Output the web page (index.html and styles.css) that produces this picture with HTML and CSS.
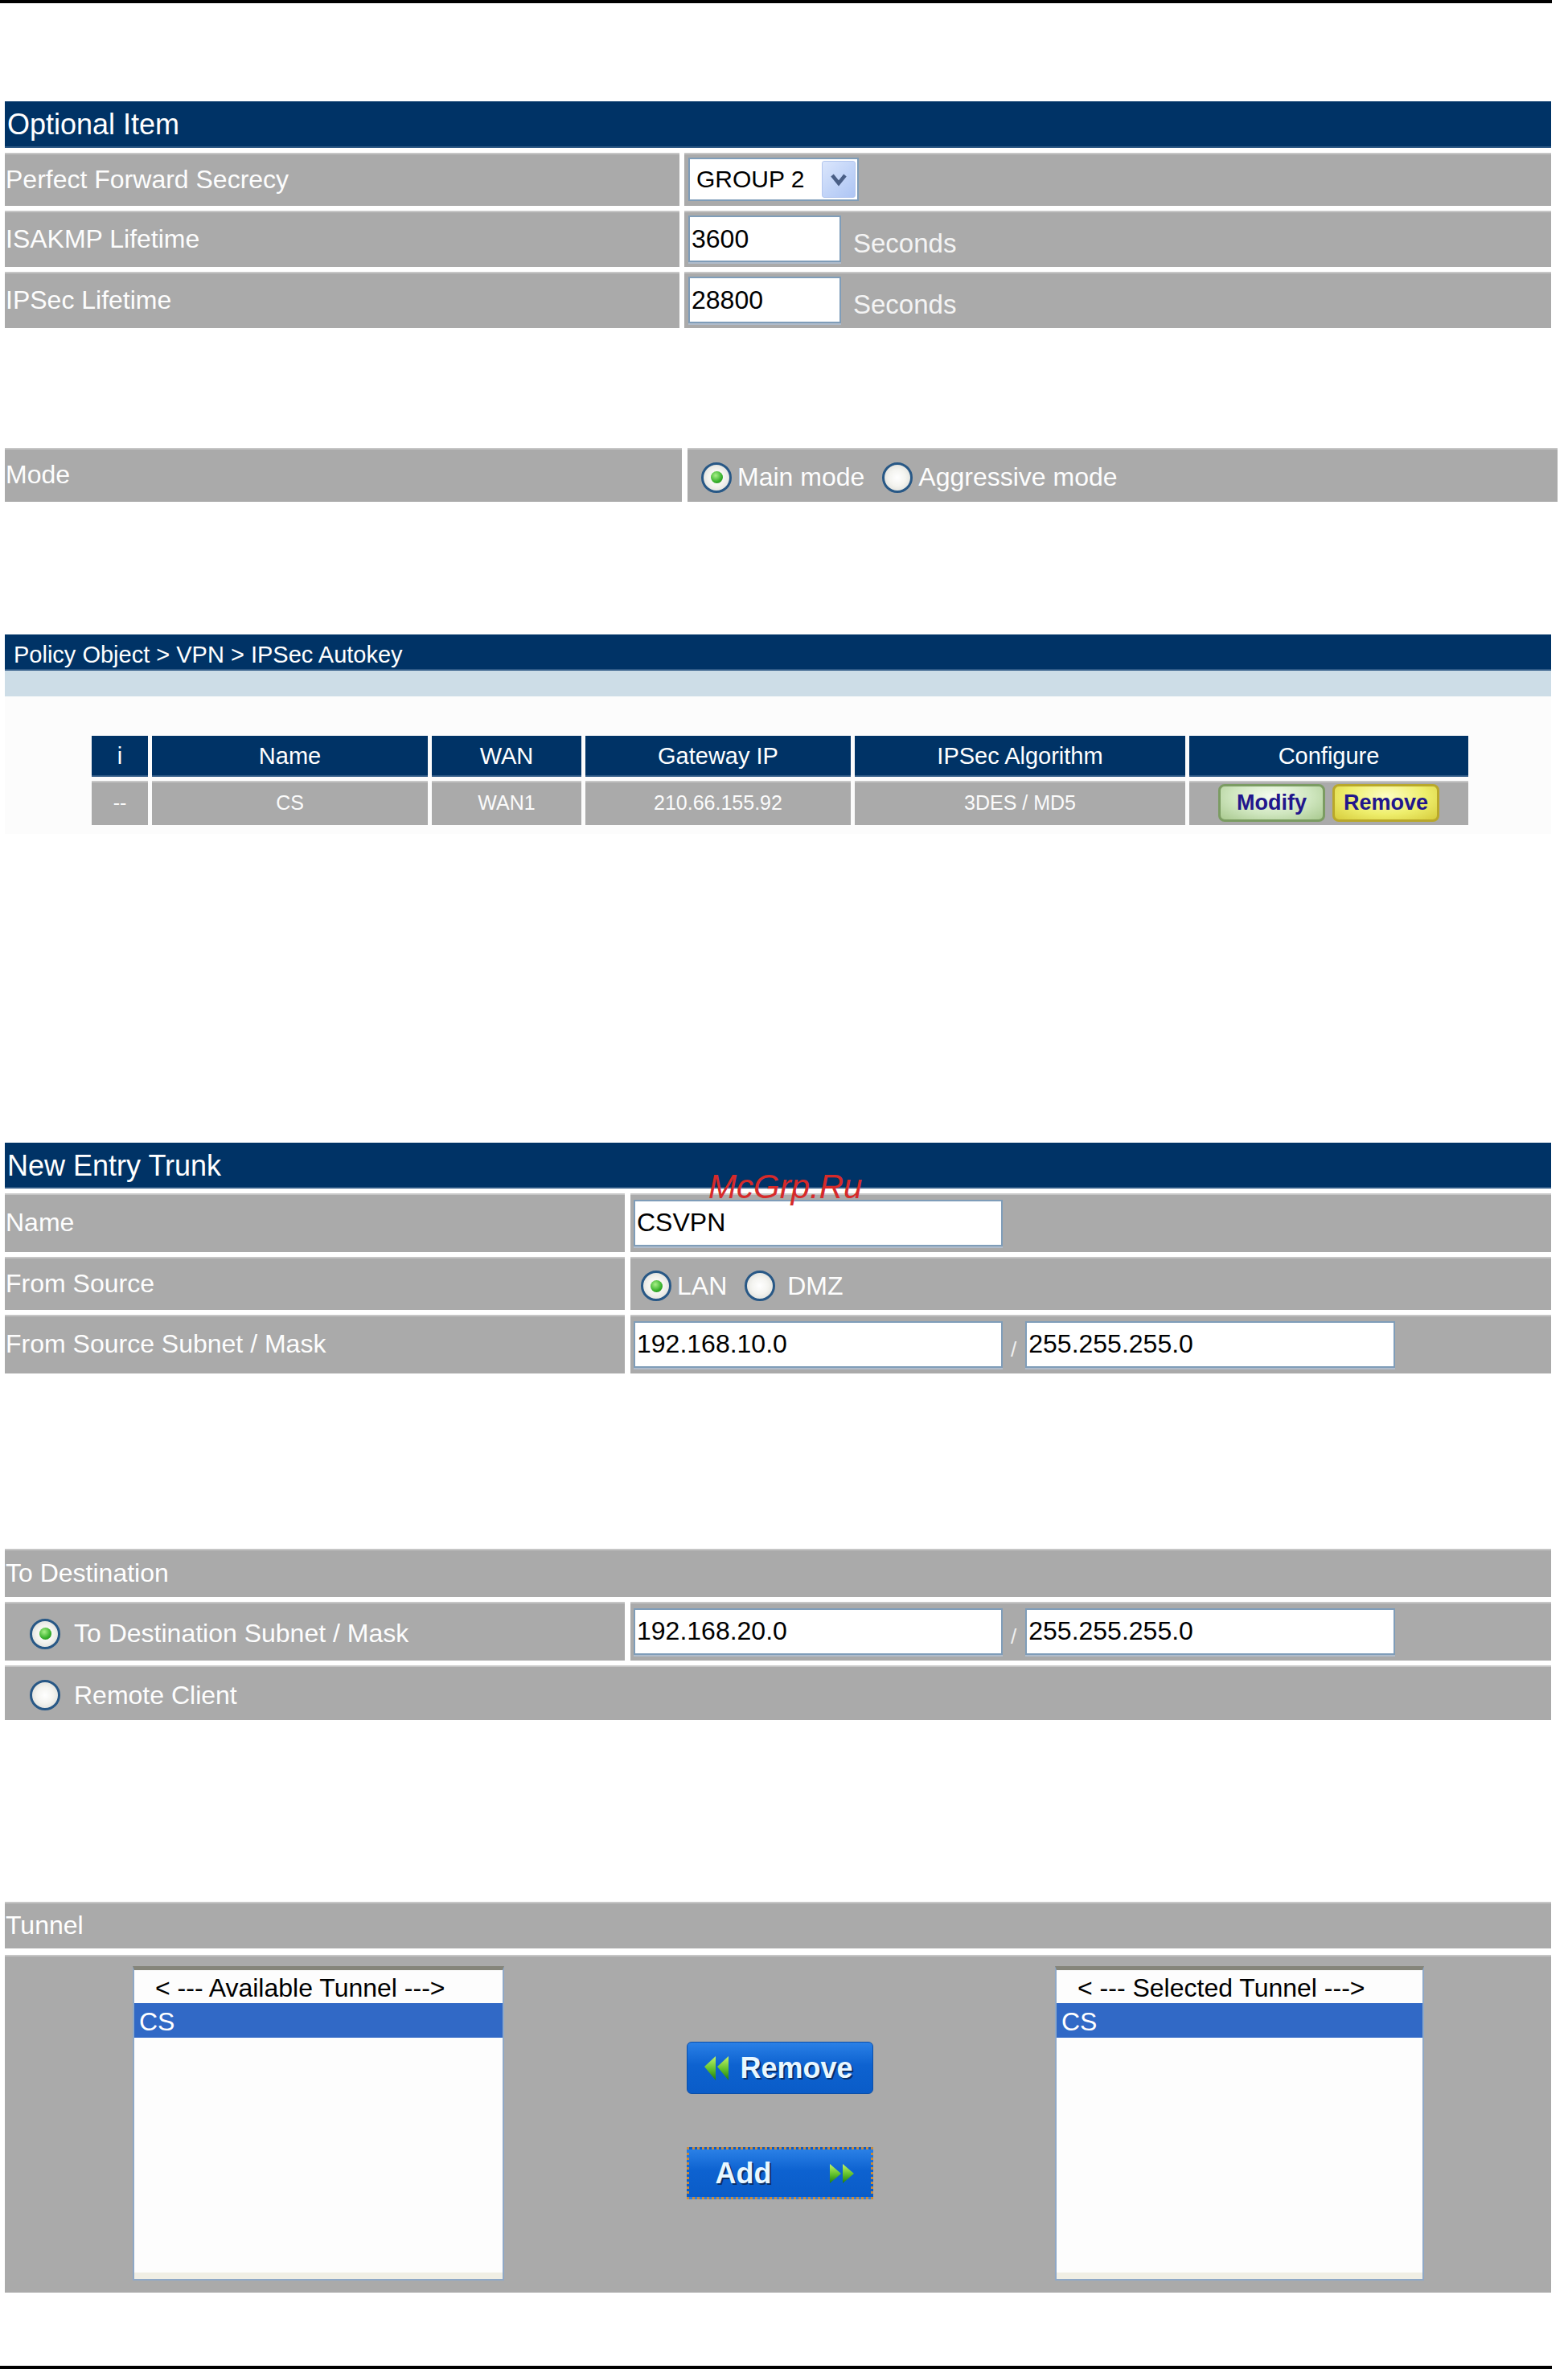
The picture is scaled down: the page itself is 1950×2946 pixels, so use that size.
FILE: index.html
```html
<!DOCTYPE html>
<html>
<head>
<meta charset="utf-8">
<title>IPSec Autokey</title>
<link rel="stylesheet" href="styles.css">
</head>
<body>
<div class="page">
  <div class="rule"></div>

  <section class="block block-optional">
    <div class="bar navy h58">Optional Item</div>
    <div class="row cols-a h66">
      <div class="cell label">Perfect Forward Secrecy</div>
      <div class="cell value pad5">
        <div class="select">
          <span class="select-text">GROUP 2</span>
          <span class="select-btn"><svg width="40" height="44" viewBox="0 0 40 44"><polyline points="12,17 20,27 28,17" fill="none" stroke="#4a5f86" stroke-width="4.5"/></svg></span>
        </div>
      </div>
    </div>
    <div class="row cols-a h70">
      <div class="cell label">ISAKMP Lifetime</div>
      <div class="cell value pad5">
        <div class="field w190">3600</div>
        <span class="unit">Seconds</span>
      </div>
    </div>
    <div class="row cols-a h70">
      <div class="cell label">IPSec Lifetime</div>
      <div class="cell value pad5">
        <div class="field w190">28800</div>
        <span class="unit">Seconds</span>
      </div>
    </div>
  </section>

  <section class="block block-mode">
    <div class="row cols-mode h67">
      <div class="cell label">Mode</div>
      <div class="cell value pad17 low">
        <span class="radio checked"></span><span class="opt">Main mode</span>
        <span class="radio gap-l"></span><span class="opt">Aggressive mode</span>
      </div>
    </div>
  </section>

  <section class="block block-policy">
    <div class="bar navy h45 crumb">Policy Object &gt; VPN &gt; IPSec Autokey</div>
    <div class="band"></div>
    <div class="policy-area">
      <div class="ptable">
        <div class="th">i</div>
        <div class="th">Name</div>
        <div class="th">WAN</div>
        <div class="th">Gateway IP</div>
        <div class="th">IPSec Algorithm</div>
        <div class="th">Configure</div>
        <div class="td">--</div>
        <div class="td">CS</div>
        <div class="td">WAN1</div>
        <div class="td">210.66.155.92</div>
        <div class="td">3DES / MD5</div>
        <div class="td td-btns">
          <span class="sbtn sbtn-modify">Modify</span>
          <span class="sbtn sbtn-remove">Remove</span>
        </div>
      </div>
    </div>
  </section>

  <section class="block block-trunk">
    <div class="bar navy h57">New Entry Trunk</div>
    <div class="row cols-b h73">
      <div class="cell label">Name</div>
      <div class="cell value pad4">
        <div class="field w459">CSVPN</div>
      </div>
    </div>
    <div class="row cols-b h66">
      <div class="cell label">From Source</div>
      <div class="cell value pad13 low">
        <span class="radio checked"></span><span class="opt">LAN</span>
        <span class="radio gap-l"></span><span class="opt opt-wide">DMZ</span>
      </div>
    </div>
    <div class="row cols-b h73">
      <div class="cell label">From Source Subnet / Mask</div>
      <div class="cell value pad4">
        <div class="field w459">192.168.10.0</div>
        <span class="slash">/</span>
        <div class="field w460">255.255.255.0</div>
      </div>
    </div>
  </section>

  <section class="block block-dest">
    <div class="bar grey h60">To Destination</div>
    <div class="row cols-b h73">
      <div class="cell label pad31 low">
        <span class="radio checked"></span><span class="opt opt-dest">To Destination Subnet / Mask</span>
      </div>
      <div class="cell value pad4">
        <div class="field w459">192.168.20.0</div>
        <span class="slash">/</span>
        <div class="field w460">255.255.255.0</div>
      </div>
    </div>
    <div class="row cols-full h68">
      <div class="cell label pad31 low">
        <span class="radio"></span><span class="opt opt-dest">Remote Client</span>
      </div>
    </div>
  </section>

  <section class="block block-tunnel">
    <div class="bar grey h58">Tunnel</div>
    <div class="tunnel-body">
      <div class="listbox">
        <div class="lb-opt lb-head">&lt; --- Available Tunnel ---&gt;</div>
        <div class="lb-opt lb-sel">CS</div>
      </div>
      <div class="mover">
        <div class="bbtn bbtn-remove">
          <svg class="arrows" width="38" height="34" viewBox="0 0 38 34"><defs><linearGradient id="ga" x1="0" y1="0" x2="0" y2="1"><stop offset="0" stop-color="#c4f56a"/><stop offset="0.55" stop-color="#5fc02a"/><stop offset="1" stop-color="#1f7a12"/></linearGradient></defs><polygon points="3,15 17,2 17,32" fill="url(#ga)"/><polygon points="19,15 33,2 33,32" fill="url(#ga)"/></svg>
          <span class="bbtn-text">Remove</span>
        </div>
        <div class="bbtn bbtn-add">
          <span class="bbtn-text">Add</span>
          <svg class="arrows" width="36" height="28" viewBox="0 0 36 28"><defs><linearGradient id="gb" x1="0" y1="0" x2="0" y2="1"><stop offset="0" stop-color="#c4f56a"/><stop offset="0.55" stop-color="#5fc02a"/><stop offset="1" stop-color="#1f7a12"/></linearGradient></defs><polygon points="3,2 17,14 3,26" fill="url(#gb)"/><polygon points="19,2 33,14 19,26" fill="url(#gb)"/></svg>
        </div>
      </div>
      <div class="listbox">
        <div class="lb-opt lb-head">&lt; --- Selected Tunnel ---&gt;</div>
        <div class="lb-opt lb-sel">CS</div>
      </div>
    </div>
  </section>

  <div class="rule rule-bottom"></div>

  <div class="watermark">McGrp.Ru</div>
</div>
</body>
</html>
```

FILE: styles.css
```css
* { box-sizing: border-box; }
html, body { margin: 0; padding: 0; background: #ffffff; }
body { font-family: "Liberation Sans", Arial, sans-serif; color: #ffffff; }

.page { position: relative; width: 1950px; height: 2946px; overflow: hidden; }

.rule { width: 1930px; height: 4px; background: #000000; }
.rule-bottom { margin-top: 91px; }

.block { margin-left: 6px; width: 1923px; display: flex; flex-direction: column; gap: 6px; }
.block-optional { margin-top: 122px; }
.block-mode { margin-top: 149px; width: 1931px; }
.block-policy { margin-top: 165px; gap: 0; }
.block-trunk { margin-top: 384px; }
.block-dest { margin-top: 218px; }
.block-tunnel { margin-top: 226px; gap: 8px; }

.bar { display: flex; align-items: center; font-size: 36px; padding-left: 3px; }
.navy { background: #003366; box-shadow: inset 0 -2px 0 #2f5a86; }
.grey { background: #aaaaaa; font-size: 32px; padding-left: 1px; box-shadow: inset 0 2px 0 #c6c6c6; }
.crumb { font-size: 29px; padding-left: 11px; padding-top: 5px; }

.h45 { height: 45px; }
.h57 { height: 57px; }
.h58 { height: 58px; }
.h60 { height: 60px; }
.h66 { height: 66px; }
.h67 { height: 67px; }
.h68 { height: 68px; }
.h70 { height: 70px; }
.h73 { height: 73px; }

.row { display: grid; }
.cols-a { grid-template-columns: 839px 1078px; column-gap: 6px; }
.cols-mode { grid-template-columns: 842px 1082px; column-gap: 7px; }
.cols-b { grid-template-columns: 771px 1145px; column-gap: 7px; }
.cols-full { grid-template-columns: 1923px; }

.cell { background: #aaaaaa; display: flex; align-items: center; box-shadow: inset 0 2px 0 #c6c6c6; }
.label { font-size: 32px; padding-left: 1px; color: #fdfdfd; }
.value { font-size: 32px; color: #fdfdfd; }
.low { padding-top: 6px; }
.pad4 { padding-left: 4px; }
.pad5 { padding-left: 5px; }
.pad13 { padding-left: 13px; }
.pad17 { padding-left: 17px; }
.pad31 { padding-left: 31px; }

.select {
  width: 212px; height: 54px; background: #ffffff;
  border: 2px solid #7f9db9; display: flex; align-items: center; justify-content: space-between;
  padding: 0 2px 0 8px; color: #000000;
}
.select-text { font-size: 30px; }
.select-btn {
  width: 42px; height: 46px; border-radius: 3px; border: 1px solid #b3c6ee;
  background: linear-gradient(135deg, #dbe6fc 0%, #c3d5f8 50%, #aec5f4 100%);
  display: flex; align-items: center; justify-content: center;
}

.field {
  height: 58px; background: #ffffff; border: 2px solid #7f9db9;
  color: #000000; font-size: 32px; display: flex; align-items: center; padding-left: 2px;
  box-shadow: 0 2px 0 #b0bccb;
}
.w190 { width: 190px; }
.w459 { width: 459px; }
.w460 { width: 460px; }

.unit { margin-left: 15px; padding-top: 12px; font-size: 33px; color: #f4f4f4; }
.slash { margin-left: 10px; margin-right: 11px; font-size: 26px; padding-top: 14px; color: #f0f0f0; }

.radio {
  width: 38px; height: 38px; border-radius: 50%; flex: none;
  border: 3px solid #285886;
  background: radial-gradient(circle at 50% 50%, #ffffff 0%, #f4f4f0 45%, #d6d6d0 100%);
  position: relative;
}
.radio.checked::after {
  content: ""; position: absolute; left: 50%; top: 50%; width: 15px; height: 15px;
  margin: -7.5px 0 0 -7.5px; border-radius: 50%;
  background: radial-gradient(circle at 40% 35%, #a8f088 0%, #36b02a 60%, #1e7a1a 100%);
}
.gap-l { margin-left: 22px; }
.opt { margin-left: 7px; }
.opt-wide { margin-left: 15px; }
.opt-dest { margin-left: 17px; }

.band { height: 32px; background: #cddde7; }
.policy-area { height: 171px; background: #fcfcfc; padding: 49px 0 0 108px; }
.ptable {
  display: grid; width: 1712px;
  grid-template-columns: 70px 343px 186px 330px 411px 347px;
  grid-template-rows: 51px 55px;
  column-gap: 5px; row-gap: 5px;
}
.th { background: #003366; font-size: 29px; display: flex; align-items: center; justify-content: center; box-shadow: inset 0 -2px 0 #2f5a86; }
.td { background: #aaaaaa; font-size: 25px; display: flex; align-items: center; justify-content: center; color: #fbfbfb; box-shadow: inset 0 2px 0 #c6c6c6; }
.td-btns { gap: 9px; }

.sbtn {
  width: 133px; height: 47px; border-radius: 8px; font-weight: bold; font-size: 27px;
  color: #22168c; display: flex; align-items: center; justify-content: center;
}
.sbtn-modify {
  border: 3px solid #7b9c62;
  background: radial-gradient(ellipse at 50% 30%, #f4fcee 0%, #cfe6bf 55%, #a9c98f 100%);
}
.sbtn-remove {
  border: 3px solid #b9a82a;
  background: radial-gradient(ellipse at 50% 30%, #fdfdc4 0%, #eeee6c 55%, #d6cc3c 100%);
}

.tunnel-body {
  height: 420px; background: #aaaaaa;
  display: grid; grid-template-columns: 462px 1fr 459px;
  padding: 14px 158px 0 159px;
  box-shadow: inset 0 2px 0 #c6c6c6;
}
.listbox {
  height: 391px; background: #fdfdfd;
  border: 2px solid #8fa8c6; border-top: 5px solid #85857a;
  box-shadow: inset 0 -8px 0 #f0eee4;
  color: #000000; font-size: 32px;
  display: flex; flex-direction: column;
}
.lb-opt { height: 43px; display: flex; align-items: center; }
.lb-head { padding-left: 26px; height: 41px; padding-top: 3px; }
.lb-sel { background: #3169c6; color: #ffffff; padding-left: 6px; padding-top: 3px; }

.mover { display: flex; flex-direction: column; align-items: center; padding-top: 94px; gap: 66px; }
.bbtn {
  width: 232px; height: 65px; border-radius: 6px;
  background: linear-gradient(180deg, #2a80e6 0%, #0d62d0 45%, #0a5cc8 100%);
  border: 1px solid #0b4fa8;
  display: flex; align-items: center;
  font-weight: bold; font-size: 36px; color: #e8f7ff; text-shadow: 2px 2px 0 #082e66;
}
.bbtn-remove { padding-left: 18px; }
.bbtn-remove .bbtn-text { margin-left: 10px; }
.bbtn-add { padding-left: 33px; border: 3px dotted #c98a3a; border-radius: 0; }
.bbtn-add .arrows { margin-left: 70px; }

.watermark {
  position: absolute; left: 881px; top: 1455px;
  font-size: 42px; line-height: 42px; font-style: italic; color: #d62a2a;
}
```
